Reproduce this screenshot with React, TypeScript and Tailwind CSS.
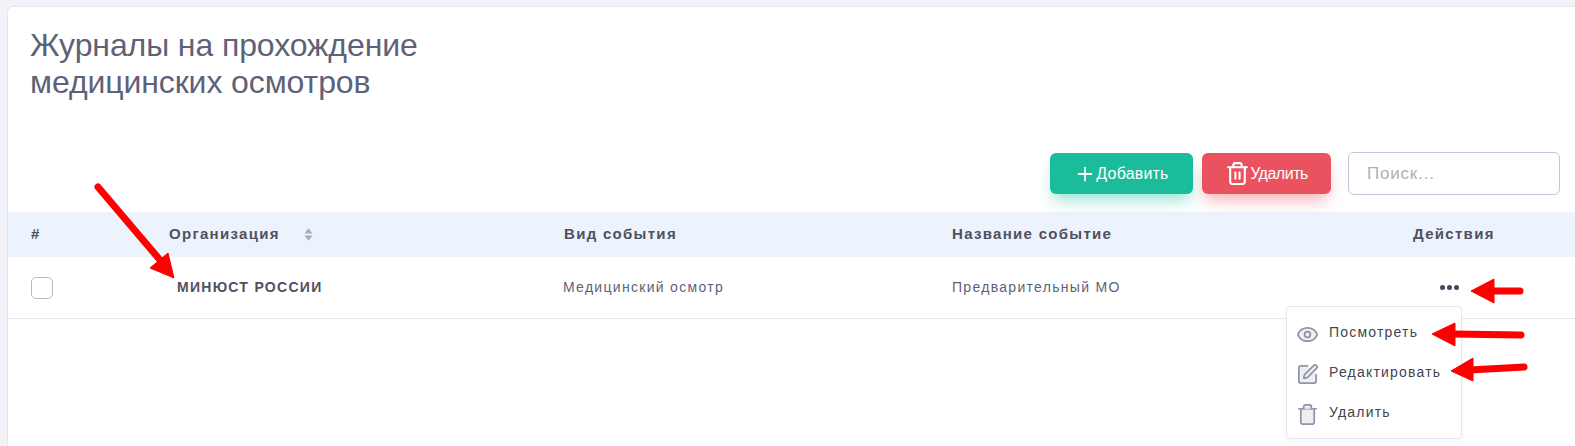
import { Eye, SquarePen, Trash2, Plus } from "lucide-react";

const font = "font-['Liberation_Sans',Arial,sans-serif]";

const Arrows = () => (
  <svg className="absolute left-0 top-0 pointer-events-none" width="1575" height="446" viewBox="0 0 1575 446">
    <g fill="#ff0000" stroke="#ff0000">
      <path d="M98 187 L160 260" strokeWidth="7" strokeLinecap="round" fill="none" />
      <path d="M150 268 L168 253 L174 278 Z" strokeWidth="1" />
      <path d="M1490 291 L1520 291" strokeWidth="7" strokeLinecap="round" fill="none" />
      <path d="M1471 291 L1494 279 L1494 303 Z" strokeWidth="1" />
      <path d="M1452 334 L1521 335" strokeWidth="7" strokeLinecap="round" fill="none" />
      <path d="M1432 334 L1455 323 L1455 346 Z" strokeWidth="1" />
      <path d="M1470 370 L1524 367" strokeWidth="7" strokeLinecap="round" fill="none" />
      <path d="M1451 371 L1473 358 L1473 381 Z" strokeWidth="1" />
    </g>
  </svg>
);

const menuItems = [
  { label: "Посмотреть", Icon: Eye },
  { label: "Редактировать", Icon: SquarePen },
  { label: "Удалить", Icon: Trash2 },
];

const App = () => {
  return (
    <div className={`${font} relative h-[446px] w-[1575px] overflow-hidden bg-[#f2f3f8] pl-[7px] pt-[6px]`}>
      <div className="h-[440px] rounded-tl-[6px] border-l border-t border-[#e3e6f0] bg-white">
        <h1 className="h-[145px] pl-[22px] pt-[20px] text-[32px] leading-[37px] tracking-[-0.1px] text-[#5e6278]">
          Журналы на прохождение
          <br />
          медицинских осмотров
        </h1>

        <div className="flex h-[60px] items-start justify-end pr-[15px]">
          <button className="mt-px flex h-[41px] w-[143px] items-center justify-center rounded-[6px] bg-[#1abc9c] text-[16px] tracking-[0.2px] text-white shadow-[0_10px_16px_-4px_rgba(26,188,156,0.45)]">
            <Plus size={22} strokeWidth={2} />
            <span>Добавить</span>
          </button>
          <button className="ml-[9px] mt-px flex h-[41px] w-[129px] items-center justify-center rounded-[6px] bg-[#e9525e] text-[16px] tracking-[-0.5px] text-white shadow-[0_10px_16px_-4px_rgba(234,84,96,0.45)]">
            <Trash2 size={25} strokeWidth={2} />
            <span>Удалить</span>
          </button>
          <input
            placeholder="Поиск..."
            className="ml-[17px] h-[43px] w-[212px] rounded-[6px] border border-[#bfc8d8] bg-white px-[18px] text-[17px] tracking-[0.8px] outline-none placeholder:text-[#b0b0b0]"
          />
        </div>

        <div className="flex h-[45px] items-center bg-[#edf3fd] text-[15px] font-bold tracking-[1.3px] text-[#50505f]">
          <div className="w-[161px] pl-[23px]">#</div>
          <div className="flex w-[395px] items-center">
            <span>Организация</span>
            <svg className="ml-[24px]" width="9" height="15" viewBox="0 0 10 15">
              <path d="M5 0.5 L9.5 6.5 H0.5 Z M0.5 8.5 H9.5 L5 14.5 Z" fill="#a9adb8" />
            </svg>
          </div>
          <div className="w-[388px]">Вид события</div>
          <div className="w-[461px]">Название событие</div>
          <div>Действия</div>
        </div>

        <div className="flex h-[62px] items-center border-b border-[#e3e6ea] text-[14px] tracking-[1.3px] text-[#5e6278]">
          <div className="w-[169px] pl-[23px]">
            <div className="h-[22px] w-[22px] rounded-[5px] border border-[#b5b9c4] bg-white" />
          </div>
          <div className="w-[386px] font-bold tracking-[1.3px] text-[#50505f]">МИНЮСТ РОССИИ</div>
          <div className="w-[389px]">Медицинский осмотр</div>
          <div className="w-[488px]">Предварительный МО</div>
          <div className="flex gap-[2px]">
            <span className="h-[5px] w-[5px] rounded-full bg-[#43465f]" />
            <span className="h-[5px] w-[5px] rounded-full bg-[#43465f]" />
            <span className="h-[5px] w-[5px] rounded-full bg-[#43465f]" />
          </div>
        </div>
      </div>

      <div className="absolute left-[1286px] top-[306px] flex h-[133px] w-[176px] flex-col rounded-[4px] border border-[#e3e6f0] bg-white pl-[9px] pt-[7px] shadow-[0_2px_6px_rgba(0,0,0,0.04)]">
        {menuItems.map(({ label, Icon }) => (
          <div key={label} className="flex h-[40px] items-center gap-[10px] text-[14px] tracking-[1.2px] text-[#44444f]">
            <Icon size={23} strokeWidth={1.8} className="text-[#8f93ab]" fill="#eeeef3" />
            <span className="mb-[3px]">{label}</span>
          </div>
        ))}
      </div>

      <Arrows />
    </div>
  );
};

export default App;
